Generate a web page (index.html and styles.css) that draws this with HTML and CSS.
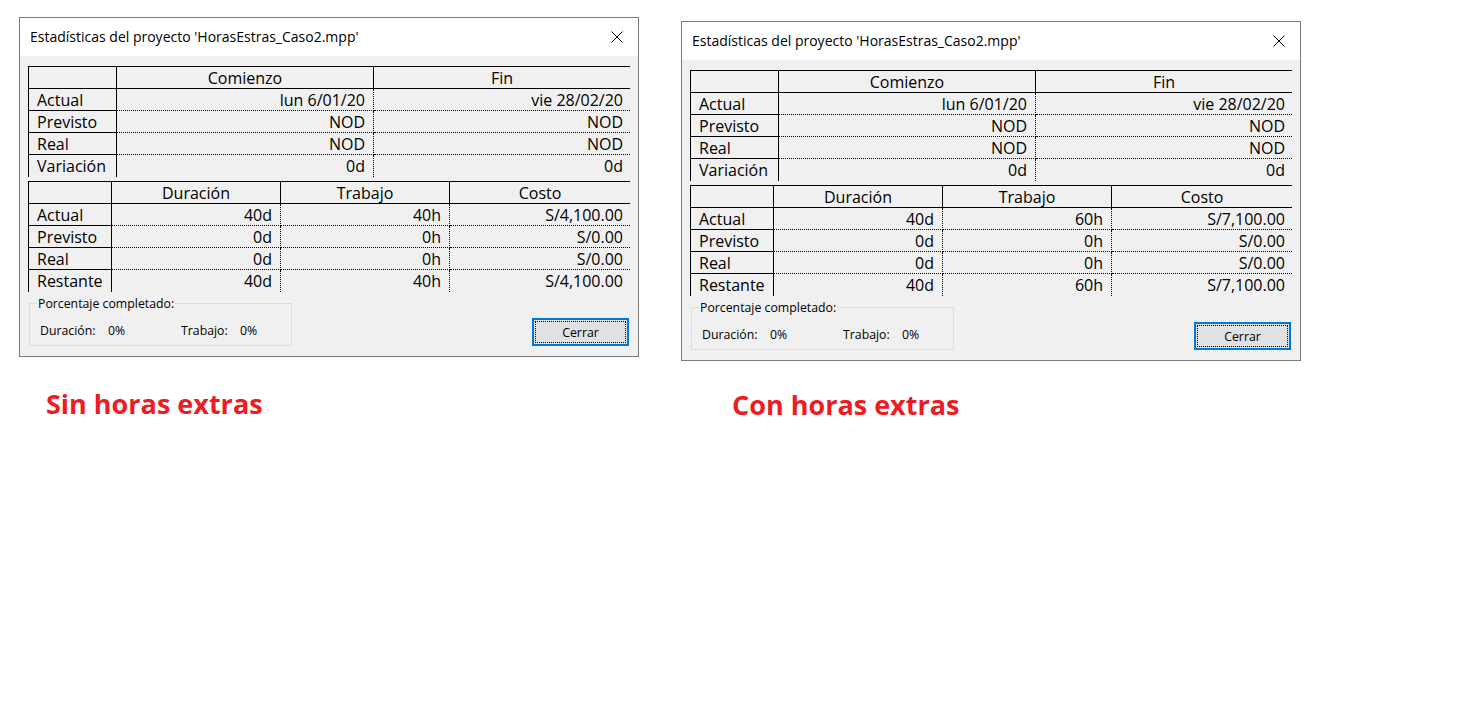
FILE: index.html
```html
<!DOCTYPE html>
<html lang="es">
<head>
<meta charset="utf-8">
<title>Estadísticas del proyecto</title>
<link rel="stylesheet" href="styles.css">
</head>
<body>
<div class="page">
  <div class="col col-1">
    <div class="dialog">
      <div class="titlebar">
        <span class="title">Estadísticas del proyecto 'HorasEstras_Caso2.mpp'</span>
        <svg class="close" width="12" height="12" viewBox="0 0 12 12"><path d="M0.5 0.5 L11.5 11.5 M11.5 0.5 L0.5 11.5" stroke="#000" stroke-width="1" fill="none"/></svg>
      </div>
      <div class="body">
        <div class="grid grid-top">
          <div class="c lab hd"></div><div class="c hd mid">Comienzo</div><div class="c hd last">Fin</div>
          <div class="c lab">Actual</div><div class="c v mid">lun 6/01/20</div><div class="c v last">vie 28/02/20</div>
          <div class="c lab">Previsto</div><div class="c v mid">NOD</div><div class="c v last">NOD</div>
          <div class="c lab">Real</div><div class="c v mid">NOD</div><div class="c v last">NOD</div>
          <div class="c lab end">Variación</div><div class="c v mid end">0d</div><div class="c v last end">0d</div>
        </div>
        <div class="grid grid-bot">
          <div class="c lab hd"></div><div class="c hd mid">Duración</div><div class="c hd mid">Trabajo</div><div class="c hd last">Costo</div>
          <div class="c lab">Actual</div><div class="c v mid">40d</div><div class="c v mid">40h</div><div class="c v last">S/4,100.00</div>
          <div class="c lab">Previsto</div><div class="c v mid">0d</div><div class="c v mid">0h</div><div class="c v last">S/0.00</div>
          <div class="c lab">Real</div><div class="c v mid">0d</div><div class="c v mid">0h</div><div class="c v last">S/0.00</div>
          <div class="c lab end">Restante</div><div class="c v mid end">40d</div><div class="c v mid end">40h</div><div class="c v last end">S/4,100.00</div>
        </div>
        <div class="foot">
          <div class="group">
            <div class="legend">Porcentaje completado:</div>
            <div class="pct">
              <span class="pl pl-d">Duración:</span><span class="pv pv-d">0%</span><span class="pl pl-t">Trabajo:</span><span class="pv">0%</span>
            </div>
          </div>
          <div class="btn"><span class="btn-in">Cerrar</span></div>
        </div>
      </div>
    </div>
    <div class="caption cap-1">Sin horas extras</div>
  </div>

  <div class="col col-2">
    <div class="dialog">
      <div class="titlebar">
        <span class="title">Estadísticas del proyecto 'HorasEstras_Caso2.mpp'</span>
        <svg class="close" width="12" height="12" viewBox="0 0 12 12"><path d="M0.5 0.5 L11.5 11.5 M11.5 0.5 L0.5 11.5" stroke="#000" stroke-width="1" fill="none"/></svg>
      </div>
      <div class="body">
        <div class="grid grid-top">
          <div class="c lab hd"></div><div class="c hd mid">Comienzo</div><div class="c hd last">Fin</div>
          <div class="c lab">Actual</div><div class="c v mid">lun 6/01/20</div><div class="c v last">vie 28/02/20</div>
          <div class="c lab">Previsto</div><div class="c v mid">NOD</div><div class="c v last">NOD</div>
          <div class="c lab">Real</div><div class="c v mid">NOD</div><div class="c v last">NOD</div>
          <div class="c lab end">Variación</div><div class="c v mid end">0d</div><div class="c v last end">0d</div>
        </div>
        <div class="grid grid-bot">
          <div class="c lab hd"></div><div class="c hd mid">Duración</div><div class="c hd mid">Trabajo</div><div class="c hd last">Costo</div>
          <div class="c lab">Actual</div><div class="c v mid">40d</div><div class="c v mid">60h</div><div class="c v last">S/7,100.00</div>
          <div class="c lab">Previsto</div><div class="c v mid">0d</div><div class="c v mid">0h</div><div class="c v last">S/0.00</div>
          <div class="c lab">Real</div><div class="c v mid">0d</div><div class="c v mid">0h</div><div class="c v last">S/0.00</div>
          <div class="c lab end">Restante</div><div class="c v mid end">40d</div><div class="c v mid end">60h</div><div class="c v last end">S/7,100.00</div>
        </div>
        <div class="foot">
          <div class="group">
            <div class="legend">Porcentaje completado:</div>
            <div class="pct">
              <span class="pl pl-d">Duración:</span><span class="pv pv-d">0%</span><span class="pl pl-t">Trabajo:</span><span class="pv">0%</span>
            </div>
          </div>
          <div class="btn"><span class="btn-in">Cerrar</span></div>
        </div>
      </div>
    </div>
    <div class="caption cap-2">Con horas extras</div>
  </div>
</div>
</body>
</html>
```

FILE: styles.css
```css
* { box-sizing: border-box; }
html, body { margin: 0; padding: 0; background: #fff; }
body { font-family: "Open Sans", "Noto Sans", sans-serif; color: #000; }

.page {
  display: flex;
  align-items: flex-start;
  padding: 17px 0 0 19px;
  gap: 42px;
}
.col { display: flex; flex-direction: column; }
.col-2 { margin-top: 4px; }

.dialog {
  width: 620px;
  height: 340px;
  border: 1px solid #7a7a7a;
  background: #f0f0f0;
  display: flex;
  flex-direction: column;
}
.titlebar {
  height: 38px;
  background: #fff;
  display: flex;
  align-items: center;
  justify-content: space-between;
  padding: 0 15px 0 10px;
}
.title { font-size: 14px; line-height: 18px; color: #000; }
.close { display: block; }

.body { padding: 10px 7px 0 8px; flex: 1; }

.grid {
  display: grid;
  border-top: 1px solid #000;
  border-left: 1px solid #000;
  width: 602px;
}
.grid-top { grid-template-columns: 88px 257px 256px; }
.grid-bot { grid-template-columns: 83px 169px 169px 180px; margin-top: 4px; }

.c {
  height: 22px;
  font-size: 16px;
  line-height: 22px;
  white-space: nowrap;
  overflow: hidden;
  border-bottom: 1px dotted #000;
}
.c.lab {
  border-right: 1px solid #000;
  border-bottom: 1px solid #000;
  padding-left: 8px;
}
.c.v { text-align: right; padding-right: 7px; }
.c.v.mid { border-right: 1px dotted #000; padding-right: 8px; }
.c.hd { text-align: center; border-bottom: 1px solid #000; }
.c.hd.mid { border-right: 1px solid #000; }
.c.end { border-bottom: 0; }

.foot {
  display: flex;
  justify-content: space-between;
  align-items: flex-start;
  margin-top: 11px;
  padding-left: 1px;
  padding-right: 2px;
}
.group {
  width: 263px;
  height: 43px;
  border: 1px solid #dcdcdc;
  font-size: 12.3px;
}
.legend {
  width: fit-content;
  margin: -9px 0 0 7px;
  padding: 0 1px;
  background: #f0f0f0;
  line-height: 17px;
}
.pct { display: flex; margin-top: 10px; padding-left: 10px; line-height: 17px; }
.pl-d { width: 68px; }
.pv-d { width: 73px; }
.pl-t { width: 59px; }

.btn {
  margin-top: 15px;
  width: 97px;
  height: 28px;
  border: 2px solid #0078d7;
  background: #e1e1e1;
  padding: 1px;
}
.btn-in {
  display: flex;
  align-items: center;
  justify-content: center;
  height: 100%;
  border: 1px dotted #000;
  font-size: 12.3px;
}

.caption {
  color: #ed1c24;
  font-weight: 700;
  font-size: 27px;
  line-height: 36px;
  margin-top: 29px;
}
.cap-1 { padding-left: 27px; }
.cap-2 { padding-left: 51px; margin-top: 26px; }
```
